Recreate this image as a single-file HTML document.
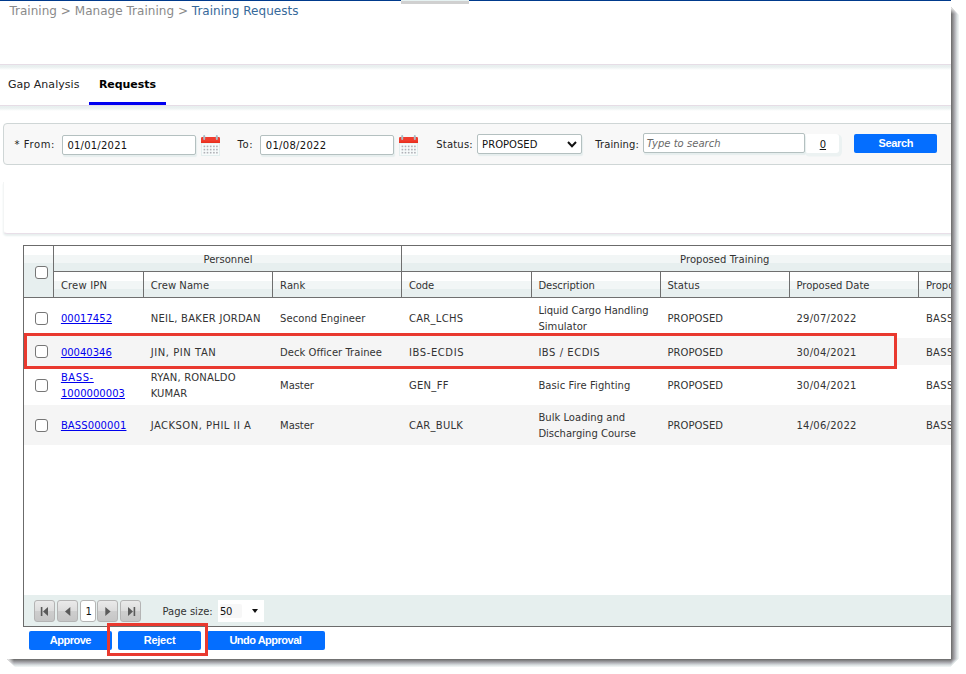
<!DOCTYPE html>
<html><head><meta charset="utf-8">
<style>
html,body{margin:0;padding:0;background:#fff;}
body{width:966px;height:674px;position:relative;overflow:hidden;font-family:"DejaVu Sans","Liberation Sans",sans-serif;font-size:10px;color:#333;}
.abs{position:absolute;}
#page{position:absolute;left:0;top:0;width:951px;height:659px;background:#fff;overflow:hidden;}
.t{position:absolute;white-space:nowrap;line-height:16px;}
.inp{position:absolute;box-sizing:border-box;background:#fff;border:1px solid #b4c0c0;border-radius:2px;box-shadow:1px 2px 1px #e6eeee;}
.btn{position:absolute;background:#046eff;border-radius:2px;}
.bt{font-family:"Liberation Sans",sans-serif;font-weight:bold;color:#fff;}
a{color:#0000ee;text-decoration:underline;}
.cb{position:absolute;width:13px;height:13px;box-sizing:border-box;border:1.5px solid #767676;border-radius:3px;background:#fff;}
.pb{position:absolute;width:21px;height:22px;box-sizing:border-box;border:1px solid #b4b4b4;border-radius:3px;background:linear-gradient(#eaeaea 0,#dcdcdc 50%,#cecece 50%,#c6c6c6 100%);overflow:hidden}
.pb svg{position:absolute;left:-1px;top:-1px}
</style></head><body>
<div id="page">
<div class="abs" style="left:0;top:0;width:951px;height:1px;background:#003a8c"></div>
<div class="abs" style="left:401px;top:0;width:68px;height:1px;background:#e6f2f2"></div>
<div class="abs" style="left:401px;top:1px;width:68px;height:3px;background:#d0d0d0"></div>
<div class="t " style="left:9.4px;top:3px;font-size:12px;color:#8a8a8a;letter-spacing:0.03px;">Training &gt; Manage Training &gt; <span style="color:#37699a">Training Requests</span></div>
<div class="abs" style="left:0;top:64px;width:951px;height:6px;background:linear-gradient(#e6dde6 0,#e6dde6 1px,#e8efef 1px,#eaf0f0 3px,#fff 6px)"></div>
<div class="t " style="left:7.9px;top:77px;font-size:11px;color:#222;letter-spacing:0.04px;">Gap Analysis</div>
<div class="t " style="left:98.9px;top:77px;font-size:11px;color:#000;font-weight:bold;letter-spacing:-0.04px;">Requests</div>
<div class="abs" style="left:0;top:105px;width:951px;height:6px;background:linear-gradient(#e6dde6 0,#e6dde6 1px,#e8efef 1px,#eaf0f0 3px,#fff 6px)"></div>
<div class="abs" style="left:89px;top:102px;width:77px;height:3px;background:#0000f0"></div>
<div class="abs" style="left:3px;top:123px;width:960px;height:42px;box-sizing:border-box;border:1px solid #cfd6d6;border-radius:4px;background:#f8f8f8"></div>
<div class="t " style="left:14.4px;top:137px;font-size:10px;color:#222;letter-spacing:0.61px;">* From:</div>
<div class="inp" style="left:62px;top:135px;width:134px;height:20px"></div>
<div class="t " style="left:67.4px;top:138px;font-size:10px;color:#111;letter-spacing:0.23px;">01/01/2021</div>
<svg class="abs" style="left:201px;top:135px" width="19" height="21" viewBox="0 0 19 21"><rect x="0" y="8" width="19" height="13" fill="#f1f8f8"/><rect x="0.5" y="8" width="18" height="12.5" fill="#f7fbfb" stroke="#e3eeee"/><g fill="#b0b0b6"><rect x="2.6" y="10.6" width="1.6" height="1.6"/><rect x="5.7" y="10.6" width="1.6" height="1.6"/><rect x="8.9" y="10.6" width="1.6" height="1.6"/><rect x="12.1" y="10.6" width="1.6" height="1.6"/><rect x="15.1" y="10.6" width="1.6" height="1.6"/><rect x="2.6" y="13.8" width="1.6" height="1.6"/><rect x="5.7" y="13.8" width="1.6" height="1.6"/><rect x="8.9" y="13.8" width="1.6" height="1.6"/><rect x="12.1" y="13.8" width="1.6" height="1.6"/><rect x="15.1" y="13.8" width="1.6" height="1.6"/><rect x="2.6" y="16.9" width="1.6" height="1.6"/><rect x="5.7" y="16.9" width="1.6" height="1.6"/><rect x="8.9" y="16.9" width="1.6" height="1.6"/><rect x="12.1" y="16.9" width="1.6" height="1.6"/><rect x="15.1" y="16.9" width="1.6" height="1.6"/></g><rect x="0" y="2" width="19" height="6" rx="1.2" fill="#f03c2e"/><rect x="0" y="6.5" width="19" height="1.5" fill="#e8301f"/><rect x="2.2" y="0" width="2" height="5" rx="1" fill="#a9bdc6"/><rect x="14.8" y="0" width="2" height="5" rx="1" fill="#a9bdc6"/></svg>
<div class="t " style="left:237.6px;top:137px;font-size:10px;color:#222;letter-spacing:0.6px;">To:</div>
<div class="inp" style="left:260px;top:135px;width:134px;height:20px"></div>
<div class="t " style="left:265.8px;top:138px;font-size:10px;color:#111;letter-spacing:0.3px;">01/08/2022</div>
<svg class="abs" style="left:399px;top:135px" width="19" height="21" viewBox="0 0 19 21"><rect x="0" y="8" width="19" height="13" fill="#f1f8f8"/><rect x="0.5" y="8" width="18" height="12.5" fill="#f7fbfb" stroke="#e3eeee"/><g fill="#b0b0b6"><rect x="2.6" y="10.6" width="1.6" height="1.6"/><rect x="5.7" y="10.6" width="1.6" height="1.6"/><rect x="8.9" y="10.6" width="1.6" height="1.6"/><rect x="12.1" y="10.6" width="1.6" height="1.6"/><rect x="15.1" y="10.6" width="1.6" height="1.6"/><rect x="2.6" y="13.8" width="1.6" height="1.6"/><rect x="5.7" y="13.8" width="1.6" height="1.6"/><rect x="8.9" y="13.8" width="1.6" height="1.6"/><rect x="12.1" y="13.8" width="1.6" height="1.6"/><rect x="15.1" y="13.8" width="1.6" height="1.6"/><rect x="2.6" y="16.9" width="1.6" height="1.6"/><rect x="5.7" y="16.9" width="1.6" height="1.6"/><rect x="8.9" y="16.9" width="1.6" height="1.6"/><rect x="12.1" y="16.9" width="1.6" height="1.6"/><rect x="15.1" y="16.9" width="1.6" height="1.6"/></g><rect x="0" y="2" width="19" height="6" rx="1.2" fill="#f03c2e"/><rect x="0" y="6.5" width="19" height="1.5" fill="#e8301f"/><rect x="2.2" y="0" width="2" height="5" rx="1" fill="#a9bdc6"/><rect x="14.8" y="0" width="2" height="5" rx="1" fill="#a9bdc6"/></svg>
<div class="t " style="left:436.2px;top:137px;font-size:10px;color:#222;letter-spacing:0.21px;">Status:</div>
<div class="inp" style="left:477px;top:134px;width:105px;height:20px"></div>
<div class="t " style="left:482.1px;top:137px;font-size:10px;color:#111;letter-spacing:0.03px;">PROPOSED</div>
<svg class="abs" style="left:566px;top:140px" width="12" height="9" viewBox="0 0 12 9"><path d="M2 2l4 4.2l4-4.2" fill="none" stroke="#111" stroke-width="2"/></svg>
<div class="t " style="left:595.2px;top:137px;font-size:10px;color:#222;letter-spacing:0.11px;">Training:</div>
<div class="abs" style="left:805px;top:134px;width:34px;height:19px;background:#fff;border-radius:3px;box-shadow:1.5px 2px 0 1.5px #ecf2f2"></div>
<div class="inp" style="left:643px;top:133px;width:162px;height:20px"></div>
<div class="t " style="left:646.7px;top:136px;font-size:10px;color:#686868;font-style:italic;letter-spacing:0.03px;">Type to search</div>
<div class="t " style="left:819.7px;top:136.5px;font-size:10px;color:#111;text-decoration:underline;">0</div>
<div class="btn" style="left:854px;top:134px;width:83px;height:19px"></div>
<div class="t bt" style="left:878.4px;top:135px;font-size:11px;letter-spacing:-0.34px;">Search</div>
<div class="abs" style="left:3px;top:182px;width:960px;height:52px;box-sizing:border-box;border-left:1px solid #f3f5f5;border-bottom:1px solid #e8dfe8;border-radius:0 0 0 4px;background:#fff;box-shadow:0 2px 2px #e8efef"></div>
<div class="abs" style="left:23px;top:245px;width:940px;height:382px;box-sizing:border-box;border:1px solid #6b6b6b;background:#fff"></div>
<div class="abs" style="left:24px;top:246px;width:29px;height:51px;background:#e7efef"></div>
<div class="abs" style="left:24px;top:246px;width:29px;height:25px;background:linear-gradient(#fff 0,#fff 9px,#f2f6f6 9px,#f2f6f6 17px,#e7efef 17px,#e7efef 100%)"></div>
<div class="abs" style="left:54px;top:246px;width:900px;height:25px;background:linear-gradient(#fff 0,#fff 9px,#f2f6f6 9px,#f2f6f6 17px,#e7efef 17px,#e7efef 100%)"></div>
<div class="abs" style="left:54px;top:272px;width:900px;height:25px;background:linear-gradient(#fff 0,#fff 9px,#f2f6f6 9px,#f2f6f6 17px,#e7efef 17px,#e7efef 100%)"></div>
<div class="abs" style="left:53px;top:271px;width:900px;height:1px;background:#6f6f6f"></div>
<div class="abs" style="left:24px;top:297px;width:930px;height:1px;background:#6f6f6f"></div>
<div class="abs" style="left:53px;top:246px;width:1px;height:51px;background:#6f6f6f"></div>
<div class="abs" style="left:401px;top:246px;width:1px;height:51px;background:#6f6f6f"></div>
<div class="abs" style="left:143px;top:272px;width:1px;height:25px;background:#6f6f6f"></div>
<div class="abs" style="left:272px;top:272px;width:1px;height:25px;background:#6f6f6f"></div>
<div class="abs" style="left:531px;top:272px;width:1px;height:25px;background:#6f6f6f"></div>
<div class="abs" style="left:660px;top:272px;width:1px;height:25px;background:#6f6f6f"></div>
<div class="abs" style="left:789px;top:272px;width:1px;height:25px;background:#6f6f6f"></div>
<div class="abs" style="left:918px;top:272px;width:1px;height:25px;background:#6f6f6f"></div>
<div class="t " style="left:203.5px;top:252px;font-size:10px;letter-spacing:0.02px;">Personnel</div>
<div class="t " style="left:680.1px;top:252px;font-size:10px;letter-spacing:0.04px;">Proposed Training</div>
<div class="t " style="left:60.9px;top:278px;font-size:10px;letter-spacing:0.18px;">Crew IPN</div>
<div class="t " style="left:150.7px;top:278px;font-size:10px;letter-spacing:0.06px;">Crew Name</div>
<div class="t " style="left:280.1px;top:278px;font-size:10px;letter-spacing:0.07px;">Rank</div>
<div class="t " style="left:409.0px;top:278px;font-size:10px;letter-spacing:-0.12px;">Code</div>
<div class="t " style="left:538.4px;top:278px;font-size:10px;letter-spacing:-0.05px;">Description</div>
<div class="t " style="left:667.4px;top:278px;font-size:10px;letter-spacing:0.08px;">Status</div>
<div class="t " style="left:796.4px;top:278px;font-size:10px;">Proposed Date</div>
<div class="t " style="left:925.9px;top:278px;font-size:10px;letter-spacing:0.04px;">Proposed By</div>
<div class="cb" style="left:35px;top:266px"></div>
<div class="cb" style="left:35px;top:312px"></div>
<div class="t " style="left:60.9px;top:311px;font-size:10px;letter-spacing:0.03px;"><a>00017452</a></div>
<div class="t " style="left:150.7px;top:311px;font-size:10px;letter-spacing:0.28px;">NEIL, BAKER JORDAN</div>
<div class="t " style="left:280.1px;top:311px;font-size:10px;letter-spacing:0.05px;">Second Engineer</div>
<div class="t " style="left:409.0px;top:311px;font-size:10px;letter-spacing:0.26px;">CAR_LCHS</div>
<div class="t " style="left:538.4px;top:303px;font-size:10px;letter-spacing:-0.02px;">Liquid Cargo Handling</div>
<div class="t " style="left:538.4px;top:319px;font-size:10px;letter-spacing:0.04px;">Simulator</div>
<div class="t " style="left:667.4px;top:311px;font-size:10px;letter-spacing:0.07px;">PROPOSED</div>
<div class="t " style="left:796.4px;top:311px;font-size:10px;letter-spacing:0.26px;">29/07/2022</div>
<div class="t " style="left:925.9px;top:311px;font-size:10px;letter-spacing:0.32px;">BASS</div>
<div class="abs" style="left:24px;top:338px;width:930px;height:27px;background:#f5f5f5"></div>
<div class="abs" style="left:27px;top:336px;width:867px;height:30px;background:#f5f5f5"></div>
<div class="cb" style="left:35px;top:345px"></div>
<div class="t " style="left:60.9px;top:345px;font-size:10px;"><a>00040346</a></div>
<div class="t " style="left:150.7px;top:345px;font-size:10px;letter-spacing:0.55px;">JIN, PIN TAN</div>
<div class="t " style="left:280.1px;top:345px;font-size:10px;letter-spacing:0.03px;">Deck Officer Trainee</div>
<div class="t " style="left:409.0px;top:345px;font-size:10px;letter-spacing:0.58px;">IBS-ECDIS</div>
<div class="t " style="left:538.4px;top:345px;font-size:10px;letter-spacing:0.53px;">IBS / ECDIS</div>
<div class="t " style="left:667.4px;top:345px;font-size:10px;letter-spacing:0.07px;">PROPOSED</div>
<div class="t " style="left:796.4px;top:345px;font-size:10px;letter-spacing:0.26px;">30/04/2021</div>
<div class="t " style="left:925.9px;top:345px;font-size:10px;letter-spacing:0.32px;">BASS</div>
<div class="cb" style="left:35px;top:379px"></div>
<div class="t " style="left:60.9px;top:370px;font-size:10px;letter-spacing:0.57px;"><a>BASS-</a></div>
<div class="t " style="left:60.9px;top:386px;font-size:10px;letter-spacing:0.05px;"><a>1000000003</a></div>
<div class="t " style="left:150.7px;top:370px;font-size:10px;letter-spacing:0.19px;">RYAN, RONALDO</div>
<div class="t " style="left:150.7px;top:386px;font-size:10px;letter-spacing:0.11px;">KUMAR</div>
<div class="t " style="left:280.1px;top:378px;font-size:10px;letter-spacing:-0.07px;">Master</div>
<div class="t " style="left:409.0px;top:378px;font-size:10px;letter-spacing:0.27px;">GEN_FF</div>
<div class="t " style="left:538.4px;top:378px;font-size:10px;letter-spacing:0.08px;">Basic Fire Fighting</div>
<div class="t " style="left:667.4px;top:378px;font-size:10px;letter-spacing:0.07px;">PROPOSED</div>
<div class="t " style="left:796.4px;top:378px;font-size:10px;letter-spacing:0.26px;">30/04/2021</div>
<div class="t " style="left:925.9px;top:378px;font-size:10px;letter-spacing:0.32px;">BASS</div>
<div class="abs" style="left:24px;top:405px;width:930px;height:40px;background:#f5f5f5"></div>
<div class="cb" style="left:35px;top:419px"></div>
<div class="t " style="left:60.9px;top:418px;font-size:10px;letter-spacing:0.1px;"><a>BASS000001</a></div>
<div class="t " style="left:150.7px;top:418px;font-size:10px;letter-spacing:0.47px;">JACKSON, PHIL II A</div>
<div class="t " style="left:280.1px;top:418px;font-size:10px;letter-spacing:-0.07px;">Master</div>
<div class="t " style="left:409.0px;top:418px;font-size:10px;letter-spacing:0.25px;">CAR_BULK</div>
<div class="t " style="left:538.4px;top:410px;font-size:10px;letter-spacing:0.02px;">Bulk Loading and</div>
<div class="t " style="left:538.4px;top:426px;font-size:10px;">Discharging Course</div>
<div class="t " style="left:667.4px;top:418px;font-size:10px;letter-spacing:0.07px;">PROPOSED</div>
<div class="t " style="left:796.4px;top:418px;font-size:10px;letter-spacing:0.26px;">14/06/2022</div>
<div class="t " style="left:925.9px;top:418px;font-size:10px;letter-spacing:0.32px;">BASS</div>
<div class="abs" style="left:24px;top:333px;width:873px;height:36px;box-sizing:border-box;border:3px solid #e9392f"></div>
<div class="abs" style="left:24px;top:595px;width:930px;height:31px;background:#e6efee"></div>
<div class="pb" style="left:34px;top:600px"><svg width="21" height="21" viewBox="0 0 21 21"><rect x="6.8" y="7" width="1.6" height="9" fill="#5a5a5a"/><path d="M14 7v9l-5-4.5z" fill="#5a5a5a"/></svg></div>
<div class="pb" style="left:57px;top:600px"><svg width="21" height="21" viewBox="0 0 21 21"><path d="M13.3 7v9l-5.3-4.5z" fill="#5a5a5a"/></svg></div>
<div class="abs" style="left:80px;top:600px;width:16px;height:22px;box-sizing:border-box;border:1px solid #b5b5b5;border-radius:3px;background:#fff"></div>
<div class="t " style="left:85.4px;top:604px;font-size:10px;color:#111;">1</div>
<div class="pb" style="left:97px;top:600px"><svg width="21" height="21" viewBox="0 0 21 21"><path d="M8.3 7v9l5.3-4.5z" fill="#5a5a5a"/></svg></div>
<div class="pb" style="left:120px;top:600px"><svg width="21" height="21" viewBox="0 0 21 21"><rect x="13.6" y="7" width="1.6" height="9" fill="#5a5a5a"/><path d="M8 7v9l5-4.5z" fill="#5a5a5a"/></svg></div>
<div class="t " style="left:162.4px;top:604px;font-size:10px;letter-spacing:0.02px;">Page size:</div>
<div class="abs" style="left:218px;top:600px;width:46px;height:22px;background:#fff"></div>
<div class="abs" style="left:220px;top:604px;width:22px;height:14px;background:#f7f7f7;border-radius:2px"></div>
<div class="t " style="left:220.0px;top:604px;font-size:10px;color:#111;letter-spacing:-0.43px;">50</div>
<div class="abs" style="left:252px;top:609px;width:0;height:0;border-left:3.7px solid transparent;border-right:3.7px solid transparent;border-top:4.5px solid #111"></div>
<div class="btn" style="left:29px;top:631px;width:83px;height:19px"></div>
<div class="btn" style="left:118px;top:631px;width:83px;height:19px"></div>
<div class="btn" style="left:207px;top:631px;width:118px;height:19px"></div>
<div class="t bt" style="left:49.8px;top:632px;font-size:11px;letter-spacing:-0.5px;">Approve</div>
<div class="t bt" style="left:143.7px;top:632px;font-size:11px;letter-spacing:-0.23px;">Reject</div>
<div class="t bt" style="left:229.4px;top:632px;font-size:11px;letter-spacing:-0.5px;">Undo Approval</div>
<div class="abs" style="left:107px;top:623px;width:101px;height:33px;box-sizing:border-box;border:3px solid #e9392f"></div>
</div>
<div class="abs" style="left:951px;top:7px;width:8px;height:652px;background:linear-gradient(to bottom,#fff 0,rgba(255,255,255,0) 7px),linear-gradient(to right,#686868 0,#8e8e90 25%,#b4b4ba 50%,#d9dfe0 75%,#f4f8f8 100%);clip-path:polygon(0 0,100% 8px,100% 100%,0 100%)"></div>
<div class="abs" style="left:7px;top:659px;width:944px;height:8px;background:linear-gradient(to right,#fff 0,rgba(255,255,255,0) 7px),linear-gradient(to bottom,#686868 0,#8e8e90 25%,#b4b4ba 50%,#d9dfe0 75%,#f4f8f8 100%);clip-path:polygon(0 0,100% 0,100% 100%,8px 100%)"></div>
<div class="abs" style="left:951px;top:659px;width:8px;height:8px;background:linear-gradient(135deg,#686868 0,#8e8e90 12%,#b4b4ba 25%,#d9dfe0 38%,#f4f8f8 50%,#fff 50%)"></div>
</body></html>
